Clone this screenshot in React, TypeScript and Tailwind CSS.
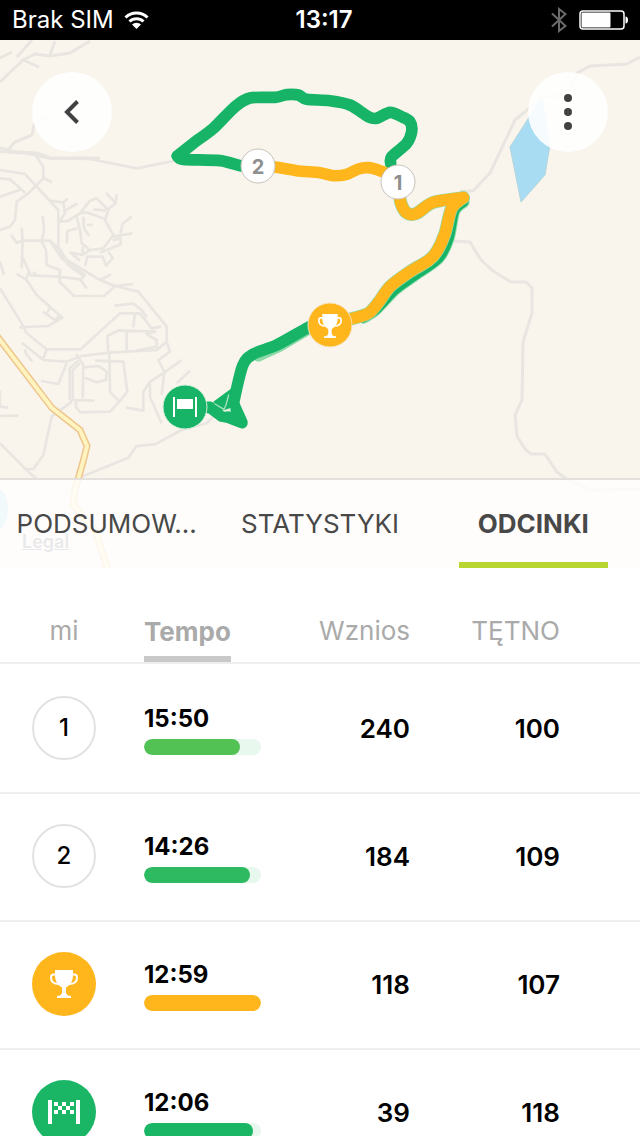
import { useState } from "react";
import type { ReactNode } from "react";

type Segment = {
  id: number;
  kind: "number" | "best" | "finish";
  pace: string;
  percent: number;
  barClass: string;
  climb: number;
  heartRate: number;
};

const segments: Segment[] = [
  { id: 1, kind: "number", pace: "15:50", percent: 82, barClass: "bg-[#52c255]", climb: 240, heartRate: 100 },
  { id: 2, kind: "number", pace: "14:26", percent: 91, barClass: "bg-[#2dba60]", climb: 184, heartRate: 109 },
  { id: 3, kind: "best", pace: "12:59", percent: 100, barClass: "bg-[#ffb61c]", climb: 118, heartRate: 107 },
  { id: 4, kind: "finish", pace: "12:06", percent: 93, barClass: "bg-[#1bb665]", climb: 39, heartRate: 118 },
];

const tabs = ["PODSUMOW...", "STATYSTYKI", "ODCINKI"];

// Streets of the town, on a grid three times finer than the map's
const streets = [
  "M0 5L80 10L150 25L270 27L410 55L520 33",
  "M110 20L130 50V85L85 130L50 155L45 210L30 230L0 240",
  "M0 60L75 72L115 115L175 180V290L200 330L300 390L345 408L415 425L500 530V575L470 600L330 608L245 618L200 635L130 630L65 578",
  "M0 85L30 88L75 128M0 140L65 118M130 85L157 97",
  "M150 152L190 158L195 190L178 215L203 213L240 190L270 152L290 145L325 180L315 210L340 255L310 295L270 300L245 280L240 240L230 200",
  "M190 185L232 160M190 158L203 145M240 190L260 187L315 207M250 200L252 235L268 258M260 225H278M280 178L318 182",
  "M318 128L347 160L350 133M347 160L322 180M395 200L367 222L362 250M397 250L338 260M338 270L362 265L362 283L300 308",
  "M200 280L202 243L232 235M270 300L248 315L212 308L240 332M248 290V312M255 348L262 320H308L318 347L338 325L325 305",
  "M65 233L68 275L65 355M33 255L50 278L65 272H150L185 325L255 375L242 388L175 380L92 376L68 322",
  "M128 197L132 240L125 275L138 300L140 345L180 360L178 395L222 438H312L345 408L398 402",
  "M150 272L175 295L205 345L250 378M300 390L333 373M240 388L260 415M100 365L110 380",
  "M50 372L78 388L110 435L187 503L145 528L58 532M78 388L85 370M128 485L165 510L178 498M152 470L140 490",
  "M0 415L65 520L80 550L140 598H242L360 490H420L455 535L483 530M343 467L400 461L425 480L440 502M405 490L400 532",
  "M325 605L322 558L355 541L465 545L440 552L470 570V590L410 602M380 545V602",
  "M500 575L510 605L475 630L493 665L485 735M545 630L493 668L450 695L430 725L430 782L378 773M570 662L530 700M450 700V740L485 820",
  "M328 610L330 725L358 755L382 725L370 635L285 632M358 755L330 785L240 787L228 770V750",
  "M209 750V655L235 632M218 750V660L240 640M228 612L250 645L248 745M209 750L283 752",
  "M252 652L295 648L320 665L318 690L290 697L255 683M200 640L175 702L123 693M140 598L130 625M75 598L78 612L97 634",
  "M215 755L155 800L130 915L100 957H70M0 880L90 970L110 985M0 335L12 375M0 770L25 773M0 798L55 797M0 722V770",
  "M640 800L620 820L545 840L465 883L410 888L385 923L245 980",
];

// Country lanes, in the map's own units
const lanes = [
  "M0 82L23 60L35 54L50 56L70 53L90 41M17 57L32 40M50 55L55 41M23 60L39 67M0 58L12 52",
  "M0 148L17 152L37 153L50 158L100 158M6 152L15 142L32 135L34 125L50 115",
  "M640 57L627 64L590 66L577 73L567 95L543 97L515 120L490 173L473 191H460",
  "M453 241L470 242L481 260L493 271L511 282H526L532 288L532 313L523 342L522 400L515 415L517 436L525 449L531 454H545L557 472L565 478L590 490L640 489",
];

// Softens the corners of a recorded track
function smooth(track: string) {
  const points = track.split(" ").map((pair) => pair.split(",").map(Number));
  let d = `M${points[0][0]} ${points[0][1]}`;
  for (let i = 0; i < points.length - 1; i++) {
    const before = points[i - 1] ?? points[i];
    const [from, to] = [points[i], points[i + 1]];
    const after = points[i + 2] ?? to;
    const c1 = [from[0] + (to[0] - before[0]) / 7, from[1] + (to[1] - before[1]) / 7];
    const c2 = [to[0] - (after[0] - from[0]) / 7, to[1] - (after[1] - from[1]) / 7];
    d += `C${c1[0]} ${c1[1]} ${c2[0]} ${c2[1]} ${to[0]} ${to[1]}`;
  }
  return d;
}

const loopStart = smooth(
  "722,250 725,230 770,190 785,155 780,125 755,110 720,97 680,115 655,110 600,75 540,62 470,58 445,45 410,44 375,52 300,54 255,80 190,145 130,190 82,228",
);
const loopEnd = smooth("82,228 100,238 210,242 275,258 320,258");
const loopOrange = smooth("320,255 375,261 440,272 510,278 550,287 590,283 625,267 655,263 690,272 745,295");
const climbTop = smooth("745,320 753,370 772,400 800,400 850,367 940,353");
const climbBottom = smooth("940,353 905,385 885,460 860,515 835,542 780,575 720,620 685,668 655,700 610,715 540,735");
const climbShadow = smooth("940,365 912,393 895,475 865,534 790,588 735,628 675,690 640,712");
const descent = smooth("540,710 475,742 380,795 310,822 278,857 250,970");

function Trophy({ className }: { className?: string }) {
  return (
    <svg viewBox="0 0 28 28" className={className} aria-hidden="true">
      <path
        fill="#fff"
        d="M5 0h18v5c0 7-3 10-7 12.500v5.500c1 2 2 3 5 3v2H7v-2c3 0 4-1 5-3v-5.500C8 15 5 12 5 5z"
      />
      <path
        fill="none"
        stroke="#fff"
        strokeWidth="2"
        d="M6 4.500H3.500C1.500 4.500 1 5.500 1 7.500c0 4.500 3 6.500 8 6.500M22 4.500h2.500c2 0 2.500 1 2.500 3 0 4.500-3 6.500-8 6.500"
      />
    </svg>
  );
}

function FinishFlag({ className }: { className?: string }) {
  return (
    <svg viewBox="0 0 32 24" className={className} aria-hidden="true">
      <path
        fill="#fff"
        d="M0 0h4v24H0zM28 0h4v24h-4zM6 2h4v4H6zM14 2h4v4h-4zM22 2h4v4h-4zM10 6h4v4h-4zM18 6h4v4h-4zM6 10h4v4H6zM14 10h4v4h-4zM22 10h4v4h-4z"
      />
    </svg>
  );
}

function StatusBar() {
  return (
    <header className="flex h-10 shrink-0 items-center bg-black px-3 text-2xl leading-10 text-white">
      <div className="flex flex-1 items-center gap-2.5">
        <span>Brak SIM</span>
        <svg width="25" height="19" viewBox="0 0 25 19" fill="none" stroke="#fff" aria-hidden="true">
          <path strokeWidth="3" d="M1.500 6.500a15.500 15.500 0 0 1 22 0M5.500 10.500a10 10 0 0 1 14 0" />
          <path fill="#fff" stroke="none" d="M8 13.500a6.500 6.500 0 0 1 9 0L12.500 18z" />
        </svg>
      </div>
      <time className="pl-2 font-semibold">13:17</time>
      <div className="flex flex-1 items-center justify-end gap-3">
        <svg width="16" height="26" viewBox="0 0 16 26" fill="none" stroke="#6b6b6b" strokeWidth="2" aria-hidden="true">
          <path d="M1 6.500L14.500 19L8 24V2L14.500 7L1 19.500" />
        </svg>
        <svg width="49" height="20" viewBox="0 0 49 20" aria-hidden="true">
          <rect x="1" y="1" width="44" height="18" rx="3" fill="none" stroke="#fff" strokeWidth="1.500" />
          <rect x="2.500" y="2.500" width="29" height="15" rx="1" fill="#fff" />
          <path fill="#fff" d="M46.500 6.500q2.500 0 2.500 3.500t-2.500 3.500z" />
        </svg>
      </div>
    </header>
  );
}

function RouteMap() {
  return (
    <svg
      viewBox="0 40 640 528"
      preserveAspectRatio="xMidYMid slice"
      className="block h-[528px] w-full bg-[#f9f5ed]"
      role="img"
      aria-label="Mapa trasy"
    >
      <g fill="none" stroke="#e9e5e1" strokeWidth="3" strokeLinejoin="round">
        {lanes.map((d) => (
          <path key={d} d={d} />
        ))}
      </g>
      <g fill="none" stroke="#e9e5e1" strokeWidth="8" strokeLinejoin="round" transform="translate(0 150) scale(.33333)">
        {streets.map((d) => (
          <path key={d} d={d} />
        ))}
      </g>
      <path fill="#a8dcf3" stroke="#b5d5dd" d="M510 147L542 97L550 145L545 175L521 202z" />
      <ellipse cx="-2" cy="509" rx="10" ry="20" fill="#a8dcf3" />
      <g fill="none" strokeLinejoin="round">
        <path stroke="#eec68d" strokeWidth="7" d="M-3 336L52 408L80 430L87 446L83 462L75 490L73 505L95 530L108 570" />
        <path stroke="#fff3bf" strokeWidth="4" d="M-3 336L52 408L80 430L87 446L83 462L75 490L73 505L95 530L108 570" />
      </g>

      <g fill="none" strokeLinecap="round" strokeLinejoin="round" strokeWidth="35" transform="translate(150 80) scale(.33333)">
        <path stroke="#8fdcaa" strokeWidth="38" d={climbShadow} />
        <path stroke="#17b467" strokeWidth="32" d={climbShadow} />
        <path stroke="#8bd9a9" strokeWidth="30" d="M475 750L390 800L325 830" />
        <path stroke="#17b467" d={loopStart} />
        <path stroke="#17b467" d={loopEnd} />
        <path stroke="#8fd9a8" strokeWidth="39" d={climbTop} />
        <path stroke="#8fd9a8" strokeWidth="39" d={climbBottom} />
        <path stroke="#ffb61c" d={loopOrange} />
        <path stroke="#ffb61c" d={climbTop} />
        <path stroke="#ffb61c" d={climbBottom} />
        <path stroke="#17b467" d={descent} />
        <path stroke="#17b467" d="M250 970L276 1028L235 1012L215 1008L180 982H105" />
        <path fill="#17b467" stroke="none" d="M190 965L245 925L262 985L215 1003z" />
        <path stroke="#a9e2c0" strokeWidth="4" d="M236 945L228 975L222 988L195 972" />
        <path fill="#ddefdc" stroke="none" d="M216 992L241 984L242 993L224 995z" />
      </g>

      <g stroke="#c6c2bb" fill="#fff">
        <circle cx="258" cy="166" r="17" />
        <circle cx="398" cy="182" r="17" />
      </g>
      <g fill="#8f8f8f" fontSize="20" fontWeight="700" textAnchor="middle">
        <text x="258" y="174">2</text>
        <text x="398" y="190">1</text>
      </g>
      <circle cx="330" cy="325" r="22" fill="#ffb61c" stroke="#f5e3bb" strokeWidth="1" />
      <svg x="318" y="314" width="24" height="24">
        <Trophy />
      </svg>
      <circle cx="185" cy="407" r="22" fill="#17b467" stroke="#d3eeda" strokeWidth="1" />
      <path fill="#fff" d="M173 397h2v20h-2zM195 397h2v20h-2zM177 399h16v10h-16z" />
    </svg>
  );
}

function MapButton({ label, children }: { label: string; children: ReactNode }) {
  return (
    <button
      type="button"
      aria-label={label}
      className="flex size-20 items-center justify-center rounded-full bg-white/90"
    >
      {children}
    </button>
  );
}

function SegmentBadge({ segment }: { segment: Segment }) {
  if (segment.kind === "best") {
    return (
      <div className="ml-8 flex size-16 items-center justify-center rounded-full bg-[#ffb61c]">
        <Trophy className="size-7" />
      </div>
    );
  }
  if (segment.kind === "finish") {
    return (
      <div className="ml-8 flex size-16 items-center justify-center rounded-full bg-[#1bb665]">
        <FinishFlag className="h-6 w-8" />
      </div>
    );
  }
  return (
    <div className="ml-8 flex size-16 items-center justify-center rounded-full border-2 border-[#e2e2e2] text-2xl font-medium">
      {segment.id}
    </div>
  );
}

export default function App() {
  const [activeTab, setActiveTab] = useState("ODCINKI");

  return (
    <div className="flex h-screen flex-col overflow-hidden bg-white font-['Inter',sans-serif] text-black">
      <StatusBar />

      <section className="relative shrink-0">
        <RouteMap />
        <div className="absolute inset-x-0 top-0 flex justify-between p-8">
          <MapButton label="Wstecz">
            <svg width="16" height="24" viewBox="0 0 16 24" fill="none" stroke="#424242" strokeWidth="4" aria-hidden="true">
              <path d="M13.500 1.500L3 12l10.500 10.500" />
            </svg>
          </MapButton>
          <MapButton label="Więcej">
            <svg width="8" height="36" viewBox="0 0 8 36" fill="#424242" aria-hidden="true">
              <circle cx="4" cy="4" r="4" />
              <circle cx="4" cy="18" r="4" />
              <circle cx="4" cy="32" r="4" />
            </svg>
          </MapButton>
        </div>
        <a
          href="#legal"
          className="absolute bottom-4 left-[22px] text-lg leading-5 font-semibold text-gray-500 underline"
        >
          Legal
        </a>
        <nav className="absolute inset-x-0 bottom-0 grid h-[90px] grid-cols-3 border-t-2 border-[#e4e1dc] bg-[#fffefd]/85">
          {tabs.map((tab) => (
            <button
              key={tab}
              type="button"
              onClick={() => setActiveTab(tab)}
              className={`relative text-[26px] leading-8 text-[#484848] ${tab === activeTab ? "font-bold" : ""}`}
            >
              {tab}
              {tab === activeTab && <span className="absolute inset-x-8 bottom-0 h-1.5 bg-[#b8d531]" />}
            </button>
          ))}
        </nav>
      </section>

      <table className="w-full table-fixed border-separate border-spacing-0 text-[26px] leading-9 font-semibold">
        <thead>
          <tr className="h-24 text-[#aaa] [&>th]:border-b-2 [&>th]:border-[#eee] [&>th]:p-0 [&>th]:font-normal">
            <th className="w-36">
              <div className="pt-8 pr-4">mi</div>
            </th>
            <th className="text-left align-bottom">
              <button type="button" className="block border-b-6 border-[#c9c9c9] pb-1.5 font-bold">
                Tempo
              </button>
            </th>
            <th className="w-[150px] text-right">
              <div className="pt-8">Wznios</div>
            </th>
            <th className="w-[230px] text-right">
              <div className="pt-8 pr-20">TĘTNO</div>
            </th>
          </tr>
        </thead>
        <tbody>
          {segments.map((segment) => (
            <tr
              key={segment.id}
              className="h-32 [&>td]:p-0 [&:not(:first-child)>td]:shadow-[inset_0_2px_#eee]"
            >
              <td>
                <SegmentBadge segment={segment} />
              </td>
              <td>
                <div className="pt-0.5 text-2xl leading-8 font-bold">{segment.pace}</div>
                <div className="mt-1 h-4 w-[117px] overflow-hidden rounded-full bg-[#e9f8ee]">
                  <div
                    className={`h-full rounded-full ${segment.barClass}`}
                    style={{ width: `${segment.percent}%` }}
                  />
                </div>
              </td>
              <td className="text-right">
                <div className="pt-0.5">{segment.climb}</div>
              </td>
              <td className="text-right">
                <div className="pt-0.5 pr-20">{segment.heartRate}</div>
              </td>
            </tr>
          ))}
        </tbody>
      </table>
    </div>
  );
}
